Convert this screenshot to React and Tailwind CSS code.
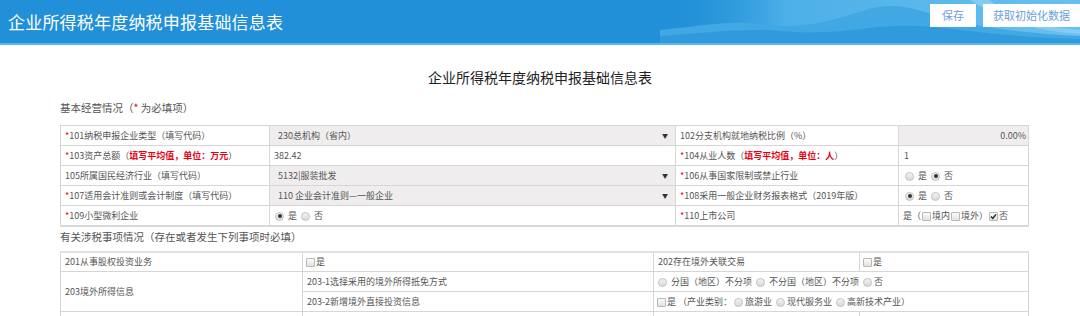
import React from 'react'

const FONT = { fontFamily: '"Noto Sans CJK SC", "Noto Sans", sans-serif' }

function Star() {
  return <span className="text-[#e60012]">*</span>
}

function Red({ children }) {
  return <span className="text-[#e60012] font-bold">{children}</span>
}

function Radio({ checked }) {
  return (
    <span className="inline-flex items-center justify-center w-[9px] h-[9px] rounded-full border border-[#c4c4c4] bg-gradient-to-b from-[#f4f4f4] to-[#d8d8d8] align-middle mx-[2px]">
      {checked && <span className="w-[4px] h-[4px] rounded-full bg-[#333]" />}
    </span>
  )
}

function Check({ checked }) {
  return (
    <span className="inline-flex items-center justify-center w-[9px] h-[9px] border border-[#b8b8b8] bg-gradient-to-b from-[#fafafa] to-[#e2e2e2] align-middle mx-[1px] rounded-[1px]">
      {checked && (
        <svg width="7" height="7" viewBox="0 0 7 7">
          <path d="M1 3.6 L2.8 5.4 L6 1.4" stroke="#222" strokeWidth="1.4" fill="none" />
        </svg>
      )}
    </span>
  )
}

function Select({ children }) {
  return (
    <div className="flex items-center justify-between pl-[8px] pr-[7px] h-full">
      <span>{children}</span>
      <span className="text-[6px] text-[#333]">▼</span>
    </div>
  )
}

function Mountains() {
  return (
    <svg className="absolute right-0 top-0" width="420" height="43" viewBox="0 0 420 43" preserveAspectRatio="none">
      <defs>
        <linearGradient id="sky" x1="0" y1="0" x2="1" y2="0">
          <stop offset="0" stopColor="#2190d8" stopOpacity="0" />
          <stop offset="0.3" stopColor="#4db0e8" />
          <stop offset="1" stopColor="#68c0ef" />
        </linearGradient>
      </defs>
      <rect x="0" y="0" width="420" height="43" fill="url(#sky)" />
      <path d="M0 30 C40 26 70 20 100 24 C130 28 150 26 180 18 C200 12 215 5 235 6 C260 8 280 18 310 24 C340 30 380 34 420 36 L420 43 L0 43 Z" fill="#42a8e4" />
      <path d="M0 36 C50 32 90 28 120 31 C150 34 180 32 210 28 C240 24 270 26 300 30 C340 35 380 38 420 39 L420 43 L0 43 Z" fill="#2f9bdd" />
      <path d="M310 0 L330 0 C345 14 360 24 420 30 L420 34 C370 30 340 20 310 0 Z" fill="#9ad6f5" opacity="0.6" />
    </svg>
  )
}

const CELL = 'border border-[#d6d6d6] px-[4px] align-middle whitespace-nowrap'

export default function App() {
  return (
    <div className="w-[1080px] bg-white text-[#555] text-[9px]" style={FONT}>
      {/* header */}
      <div className="relative h-[45px] bg-[#2190d8] border-b-2 border-[#5bb6ea] overflow-hidden">
        <Mountains />
        <div className="relative flex items-center justify-between h-[43px]">
          <div className="pl-[8px] text-white text-[17px] leading-[20px] tracking-[0.2px]">
            企业所得税年度纳税申报基础信息表
          </div>
          <div className="flex items-start gap-[7px] self-start pt-[4px]">
            <button className="w-[46px] h-[23px] bg-white text-[#6a9fdc] text-[11px]">保存</button>
            <button className="w-[97px] h-[23px] bg-white text-[#6a9fdc] text-[11px]">获取初始化数据</button>
          </div>
        </div>
      </div>

      <div className="mt-[22px] h-[20px] leading-[20px] text-center text-[14px] text-[#222]">
        企业所得税年度纳税申报基础信息表
      </div>

      <div className="px-[60px]">
        <div className="mt-[13px] h-[16px] leading-[16px] text-[10.5px] text-[#555]">
          基本经营情况（<span className="text-[#e60012]">*</span> 为必填项）
        </div>

        <table className="mt-[9px] w-[968px] table-fixed border-collapse border border-[#cfcfcf] border-b-2 border-b-[#d8d8d8]">
          <colgroup>
            <col className="w-[209px]" />
            <col className="w-[406px]" />
            <col className="w-[223px]" />
            <col className="w-[130px]" />
          </colgroup>
          <tbody>
            <tr className="h-[20px]">
              <td className={CELL}><Star />101纳税申报企业类型（填写代码）</td>
              <td className={`${CELL} !px-0 bg-[#efeded]`}><Select>230总机构（省内）</Select></td>
              <td className={CELL}>102分支机构就地纳税比例（%）</td>
              <td className={`${CELL} bg-[#efeded] text-right !pr-[2px]`}>0.00%</td>
            </tr>
            <tr className="h-[20px]">
              <td className={CELL}><Star />103资产总额（<Red>填写平均值，单位：万元</Red>）</td>
              <td className={CELL}>382.42</td>
              <td className={CELL}><Star />104从业人数（<Red>填写平均值，单位：人</Red>）</td>
              <td className={`${CELL} !pl-[5px]`}>1</td>
            </tr>
            <tr className="h-[20px]">
              <td className={CELL}>105所属国民经济行业（填写代码）</td>
              <td className={`${CELL} !px-0 bg-[#efeded]`}><Select>5132|服装批发</Select></td>
              <td className={CELL}><Star />106从事国家限制或禁止行业</td>
              <td className={CELL}><Radio /> 是 <Radio checked /> 否</td>
            </tr>
            <tr className="h-[20px]">
              <td className={CELL}><Star />107适用会计准则或会计制度（填写代码）</td>
              <td className={`${CELL} !px-0 bg-[#efeded]`}><Select>110 企业会计准则—一般企业</Select></td>
              <td className={CELL}><Star />108采用一般企业财务报表格式（2019年版）</td>
              <td className={CELL}><Radio checked /> 是 <Radio /> 否</td>
            </tr>
            <tr className="h-[20px]">
              <td className={CELL}><Star />109小型微利企业</td>
              <td className={`${CELL} !pl-[3px]`}><Radio checked /> 是 <Radio /> 否</td>
              <td className={CELL}><Star />110上市公司</td>
              <td className={CELL}>是（<Check />境内<Check />境外）<Check checked />否</td>
            </tr>
          </tbody>
        </table>

        <div className="mt-[2px] h-[16px] leading-[16px] text-[10.5px] text-[#555]">
          有关涉税事项情况（存在或者发生下列事项时必填）
        </div>

        <table className="mt-[6px] w-[968px] table-fixed border-collapse border border-[#cfcfcf] border-t-2 border-t-[#e0e0e0]">
          <colgroup>
            <col className="w-[242px]" />
            <col className="w-[351px]" />
            <col className="w-[206px]" />
            <col className="w-[169px]" />
          </colgroup>
          <tbody>
            <tr className="h-[20px]">
              <td className={CELL}>201从事股权投资业务</td>
              <td className={`${CELL} !pl-[2px]`}><Check />是</td>
              <td className={CELL}>202存在境外关联交易</td>
              <td className={`${CELL} !pl-[2px]`}><Check />是</td>
            </tr>
            <tr className="h-[20px]">
              <td className={CELL} rowSpan={2}>203境外所得信息</td>
              <td className={CELL}>203-1选择采用的境外所得抵免方式</td>
              <td className={`${CELL} !pl-[2px]`} colSpan={2}>
                <Radio /> 分国（地区）不分项 <Radio /> 不分国（地区）不分项 <Radio />否
              </td>
            </tr>
            <tr className="h-[20px]">
              <td className={CELL}>203-2新增境外直接投资信息</td>
              <td className={`${CELL} !pl-[2px]`} colSpan={2}>
                <Check />是 （产业类别：<Radio />旅游业 <Radio />现代服务业 <Radio />高新技术产业）
              </td>
            </tr>
            <tr className="h-[20px]">
              <td className={CELL}></td>
              <td className={CELL}></td>
              <td className={CELL}></td>
              <td className={CELL}></td>
            </tr>
          </tbody>
        </table>
        <div className="h-[20px]" />
      </div>
    </div>
  )
}
